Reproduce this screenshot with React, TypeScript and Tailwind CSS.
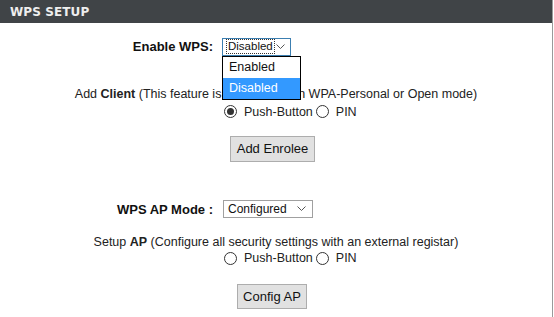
import React from 'react';

const font = { fontFamily: '"Liberation Sans", Arial, sans-serif' };

function Radio({ checked }: { checked?: boolean }) {
  return (
    <span className="inline-flex h-[13px] w-[13px] items-center justify-center rounded-full border border-[#333] bg-white">
      {checked && <span className="h-[7px] w-[7px] rounded-full bg-[#333]" />}
    </span>
  );
}

function Chevron() {
  return (
    <svg width="9" height="6" viewBox="0 0 9 6" className="text-[#555]">
      <path d="M0.5 0.5 L4.5 4.5 L8.5 0.5" fill="none" stroke="currentColor" strokeWidth="1" />
    </svg>
  );
}

function RadioRow({ first }: { first?: boolean }) {
  return (
    <div className="flex h-[16px] items-center pl-[224px] text-[12.5px] leading-[16px] text-[#222]">
      <Radio checked={first} />
      <span className="ml-[7px]">Push-Button</span>
      <span className="ml-[3px] flex"><Radio /></span>
      <span className="ml-[7px]">PIN</span>
    </div>
  );
}

export default function App() {
  return (
    <div className="h-[317px] w-[554px] overflow-hidden bg-white" style={font}>
      <div className="h-full w-[553px] border-r border-[#9a9a9a]">
        <div className="flex h-[23px] items-center bg-[#404447] pl-[10px]">
          <span className="text-[12px] font-bold tracking-[0.1px] text-[#eeeeee]" style={{ fontFamily: 'Verdana, "DejaVu Sans", sans-serif' }}>
            WPS SETUP
          </span>
        </div>

        <div className="grid grid-cols-[213px_1fr] items-center pt-[14px] text-[13px] text-[#111]">
          <div className="text-right font-bold">Enable WPS:</div>
          <div className="relative pl-[9px]">
            <div className="flex h-[18px] w-[69px] items-center justify-between border border-[#3c7fb1] bg-white pl-[3px] pr-[5px] text-[11.5px]">
              <span className="border border-dotted border-[#333] px-[1px] leading-[13px]">Disabled</span>
              <Chevron />
            </div>
            <div className="absolute left-[9px] top-[18px] z-10 w-[79px] border border-black bg-white text-[12.5px]">
              <div className="h-[21px] pl-[6px] leading-[21px] text-[#111]">Enabled</div>
              <div className="h-[21px] bg-[#3399ff] pl-[6px] leading-[21px] text-white">Disabled</div>
            </div>
          </div>
        </div>

        <div className="mt-[29px] text-center text-[12.5px] leading-[16px] text-[#222]">
          Add <b>Client</b> (This feature is<span className="inline-block w-[74px]" />in WPA-Personal or Open mode)
        </div>
        <div className="mt-[2px]">
          <RadioRow first />
        </div>
        <div className="mt-[16px] flex pl-[230px]">
          <button className="h-[26px] w-[85px] border border-[#adadad] bg-[#e1e1e1] text-[13px] text-[#111]">
            Add Enrolee
          </button>
        </div>

        <div className="mt-[38px] grid grid-cols-[213px_1fr] items-center text-[13px] text-[#111]">
          <div className="text-right font-bold">WPS AP Mode :</div>
          <div className="pl-[10px]">
            <div className="flex h-[18px] w-[90px] items-center justify-between border border-[#a0a0a0] bg-white pl-[4px] pr-[6px] text-[12px]">
              <span>Configured</span>
              <Chevron />
            </div>
          </div>
        </div>

        <div className="mt-[15px] text-center text-[12.5px] leading-[16px] text-[#222]">
          Setup <b>AP</b> (Configure all security settings with an external registar)
        </div>
        <div className="mt-0">
          <RadioRow />
        </div>
        <div className="mt-[18px] flex pl-[237px]">
          <button className="h-[25px] w-[70px] border border-[#adadad] bg-[#e1e1e1] text-[13px] text-[#111]">
            Config AP
          </button>
        </div>
      </div>
    </div>
  );
}
